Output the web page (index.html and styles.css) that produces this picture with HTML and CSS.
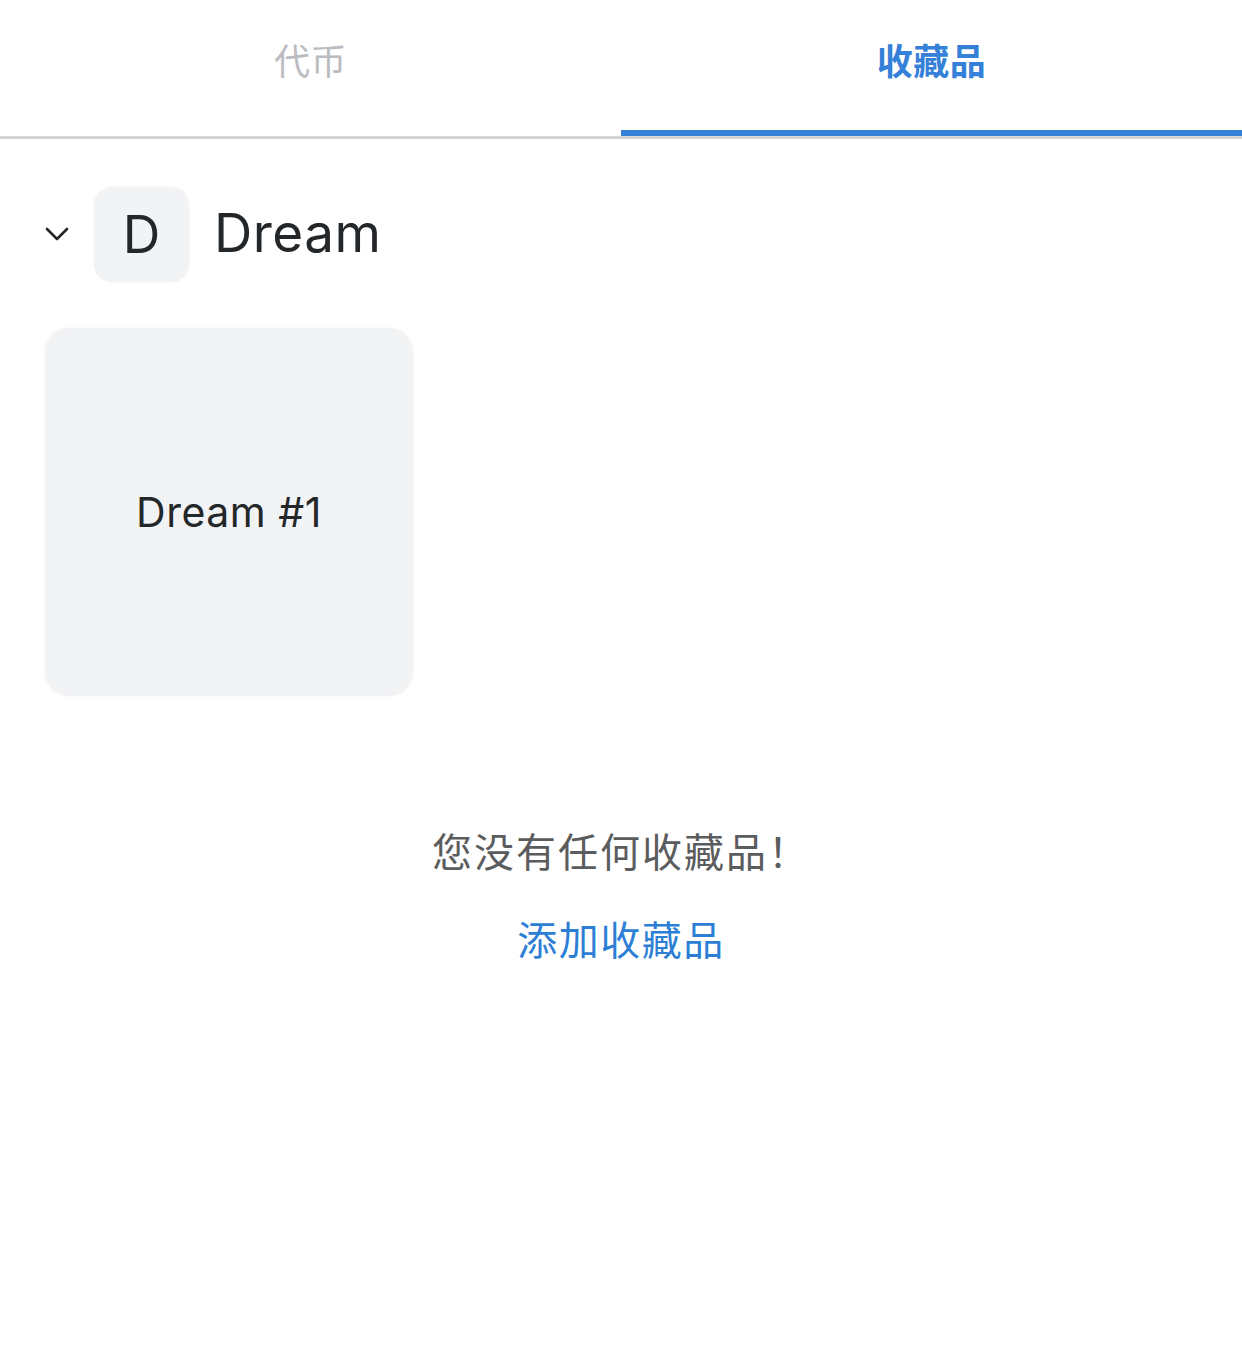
FILE: index.html
```html
<!DOCTYPE html>
<html lang="zh-CN">
<head>
<meta charset="UTF-8" />
<title>收藏品</title>
<link rel="stylesheet" href="styles.css">
</head>
<body>

<div class="tabs">
	<div class="tab">代币</div>
	<div class="tab active">收藏品</div>
</div>

<div class="collection">
	<div class="collection-head">
		<svg class="chevron" width="24" height="14" viewBox="0 0 24 14">
			<path d="M2 2 L12 12 L22 2" fill="none" stroke="#24272a" stroke-width="2.6" stroke-linecap="round" stroke-linejoin="round"/>
		</svg>
		<div class="avatar">D</div>
		<div class="collection-name">Dream</div>
	</div>

	<div class="grid">
		<div class="card">Dream #1</div>
	</div>
</div>

<div class="empty">
	<p class="empty-text">您没有任何收藏品！</p>
	<a class="add-link" href="#">添加收藏品</a>
</div>

</body>
</html>
```

FILE: styles.css
```css
body
{
	margin: 0;
	width: 1242px;
	height: 1354px;
	background-color: #fff;
	color: #24272a;
	font-family: Inter, "Noto Sans CJK SC", sans-serif;
	overflow: hidden;
}

/* tabs */
.tabs
{
	display: flex;
	border-bottom: 3px solid #d3d4d6;
}

.tab
{
	flex: 1;
	height: 118px;
	display: flex;
	align-items: center;
	justify-content: center;
	padding-bottom: 18px;
	font-family: "Noto Sans CJK SC", sans-serif;
	font-size: 36px;
	letter-spacing: 0.5px;
	color: #bbbcc0;
}

.tab.active
{
	color: #3580d8;
	font-weight: bold;
	padding-bottom: 12px;
	border-bottom: 6px solid #3580d8;
}

/* collection */
.collection
{
	padding: 47px 45px 0;
}

.collection-head
{
	display: flex;
	align-items: center;
	height: 96px;
}

.chevron
{
	margin-right: 25px;
}

.avatar
{
	width: 95px;
	height: 95px;
	border-radius: 18px;
	background-color: #f2f3f5;
	box-shadow: 0 0 3px rgba(0, 0, 0, 0.04);
	display: flex;
	align-items: center;
	justify-content: center;
	font-size: 52px;
	margin-right: 25px;
}

.collection-name
{
	font-size: 53px;
	letter-spacing: 0.5px;
	padding-bottom: 2px;
}

.grid
{
	display: grid;
	grid-template-columns: 368px;
	margin-top: 46px;
}

.card
{
	height: 368px;
	border-radius: 24px;
	background-color: #f2f3f5;
	box-shadow: 0 0 4px rgba(0, 0, 0, 0.04);
	display: flex;
	align-items: center;
	justify-content: center;
	font-size: 41px;
	letter-spacing: 0.5px;
}

/* empty state */
.empty
{
	display: flex;
	flex-direction: column;
	align-items: center;
	margin-top: 125px;
	font-family: "Noto Sans CJK SC", sans-serif;
}

.empty-text
{
	margin: 0;
	font-size: 40px;
	letter-spacing: 2px;
	color: #5b5c5e;
	line-height: 58px;
}

.add-link
{
	margin-top: 30px;
	font-size: 40px;
	letter-spacing: 1.5px;
	color: #2d7fd6;
	text-decoration: none;
	line-height: 58px;
}
```
